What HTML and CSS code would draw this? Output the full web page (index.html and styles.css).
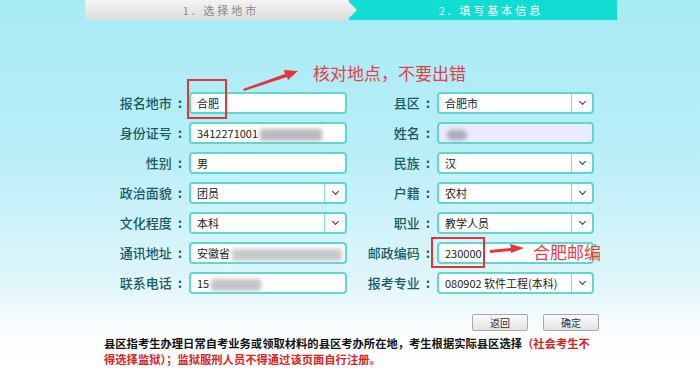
FILE: index.html
```html
<!DOCTYPE html>
<html lang="zh-CN">
<head>
    <meta charset="UTF-8">
    <title>填写基本信息</title>
    <link rel="stylesheet" href="styles.css">
</head>
<body>
    <div class="steps">
        <div class="step step-done">1. 选择地市</div>
        <div class="step step-active">2. 填写基本信息</div>
    </div>

    <div class="form-grid">
        <div class="lbl">报名地市</div>
        <div class="field">合肥</div>
        <div class="lbl">县区</div>
        <div class="field select">合肥市<span class="caret"></span></div>

        <div class="lbl">身份证号</div>
        <div class="field">3412271001<span class="blur blur-id"></span></div>
        <div class="lbl">姓名</div>
        <div class="field autofill"><span class="blur blur-name"></span></div>

        <div class="lbl">性别</div>
        <div class="field">男</div>
        <div class="lbl">民族</div>
        <div class="field select">汉<span class="caret"></span></div>

        <div class="lbl">政治面貌</div>
        <div class="field select">团员<span class="caret"></span></div>
        <div class="lbl">户籍</div>
        <div class="field select">农村<span class="caret"></span></div>

        <div class="lbl">文化程度</div>
        <div class="field select">本科<span class="caret"></span></div>
        <div class="lbl">职业</div>
        <div class="field select">教学人员<span class="caret"></span></div>

        <div class="lbl">通讯地址</div>
        <div class="field">安徽省<span class="blur blur-addr"></span></div>
        <div class="lbl">邮政编码</div>
        <div class="field">230000</div>

        <div class="lbl">联系电话</div>
        <div class="field">15<span class="blur blur-tel"></span></div>
        <div class="lbl">报考专业</div>
        <div class="field select">080902 软件工程(本科)<span class="caret"></span></div>
    </div>

    <div class="actions">
        <button class="btn">返回</button>
        <button class="btn">确定</button>
    </div>

    <p class="note">县区指考生办理日常自考业务或领取材料的县区考办所在地，考生根据实际县区选择<span class="warn">（社会考生不</span><span class="warn">得选择监狱）；监狱服刑人员不得通过该页面自行注册。</span></p>

    <!-- annotations drawn over the screenshot -->
    <div class="mark mark-city"></div>
    <div class="mark mark-zip"></div>
    <svg class="arrows" width="700" height="375" viewBox="0 0 700 375">
        <path d="M243 89 L285 74 L284 70 L298 71 L288 80 L287 77 L244 91 Z" fill="#e8333b"/>
        <path d="M490 250 L511 248 L510 244 L524 248 L511 253 L511 251 L490 253 Z" fill="#e8333b"/>
    </svg>
    <div class="tip tip-city">核对地点，不要出错</div>
    <div class="tip tip-zip">合肥邮编</div>
</body>
</html>
```

FILE: styles.css
```css
body {
    margin: 0;
    width: 700px;
    height: 375px;
    overflow: hidden;
    position: relative;
    font-family: "Noto Sans CJK SC", "Microsoft YaHei", sans-serif;
    background: linear-gradient(180deg, #a7ebf5 0%, #b9eef7 40%, #dff6fa 75%, #fafdfe 88%, #ffffff 100%);
}
.steps {
    display: flex;
    margin-left: 85px;
    width: 532px;
    height: 20px;
}
.step {
    font-size: 11px;
    line-height: 20px;
    letter-spacing: 3px;
    text-align: center;
}
.step-done {
    width: 272px;
    color: #8a8a8a;
    background: linear-gradient(180deg, #f4f4f4, #dcdcdc);
    clip-path: polygon(0 0, 262px 0, 272px 50%, 262px 100%, 0 100%);
    position: relative;
    z-index: 1;
}
.step-active {
    flex: 1;
    margin-left: -8px;
    color: #ffffff;
    background: #12ddd3;
    padding-left: 16px;
}
.form-grid {
    display: grid;
    grid-template-columns: 90px 158px 90px 157px;
    grid-auto-rows: 22px;
    row-gap: 8px;
    margin: 72px 0 0 99px;
}
.lbl {
    font-size: 13px;
    font-weight: 500;
    color: #1b5b61;
    line-height: 22px;
    text-align: right;
    padding-right: 7px;
}
.lbl::after {
    content: ":";
    font-weight: bold;
    margin-left: 6px;
}
.field {
    position: relative;
    box-sizing: border-box;
    height: 22px;
    border: 2px solid #5cd9cc;
    border-radius: 4px;
    background: #ffffff;
    padding: 0 6px;
    font-size: 11px;
    line-height: 18px;
    color: #222;
    white-space: nowrap;
}
.field.autofill {
    background: #e9ecf8;
}
.select .caret {
    position: absolute;
    right: 0;
    top: 0;
    width: 20px;
    height: 18px;
    border-left: 1px solid #7fdcd3;
}
.select .caret::after {
    content: "";
    position: absolute;
    left: 8px;
    top: 5px;
    width: 4px;
    height: 4px;
    border-right: 1.5px solid #333;
    border-bottom: 1.5px solid #333;
    transform: rotate(45deg);
}
.blur {
    display: inline-block;
    vertical-align: middle;
    height: 12px;
    background: #b9b9bf;
    filter: blur(2px);
    margin-left: 2px;
}
.blur-id { width: 62px; }
.blur-name { width: 20px; height: 10px; margin-left: 2px; border-radius: 5px; background: #a9a9b9; }
.blur-addr { width: 110px; background: #c8c8cc; }
.blur-tel { width: 50px; background: #c4c4c8; }
.actions {
    display: flex;
    justify-content: flex-end;
    gap: 15px;
    width: 599px;
    margin-top: 20px;
}
.btn {
    width: 56px;
    height: 17px;
    padding: 0;
    font-family: inherit;
    font-size: 10px;
    line-height: 14px;
    color: #333;
    border: 1px solid #a8a8a8;
    border-radius: 2px;
    background: linear-gradient(180deg, #fbfbfb, #e3e3e3);
}
.note {
    margin: 4px 0 0 104px;
    width: 492px;
    font-size: 11.3px;
    font-weight: bold;
    line-height: 16px;
    color: #111;
}
.warn {
    color: #d8231e;
}
.mark {
    position: absolute;
    border: 2px solid #e3343a;
}
.mark-city {
    left: 187px;
    top: 79px;
    width: 36px;
    height: 36px;
}
.mark-zip {
    left: 431px;
    top: 237px;
    width: 50px;
    height: 27px;
}
.arrows {
    position: absolute;
    left: 0;
    top: 0;
}
.tip {
    position: absolute;
    font-size: 17px;
    line-height: 20px;
    color: #e2404b;
}
.tip-city {
    left: 313px;
    top: 63px;
}
.tip-zip {
    left: 533px;
    top: 242px;
}
```
